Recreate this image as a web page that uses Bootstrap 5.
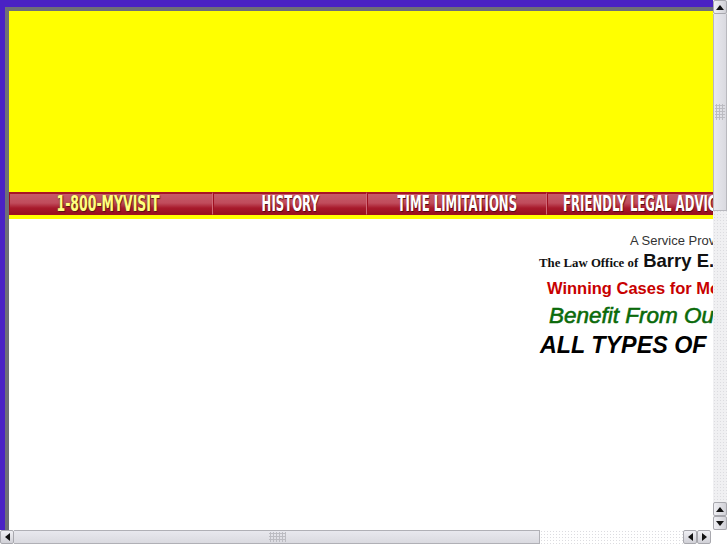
<!DOCTYPE html>
<html lang="en">
<head>
<meta charset="utf-8">
<title>1-800-MYVISIT</title>
<link href="https://cdn.jsdelivr.net/npm/bootstrap@5.3.0/dist/css/bootstrap.min.css" rel="stylesheet">
<style>
html,body{height:100%;overflow:hidden;background:#fff}
.shell{width:727px;height:545px}
.upper{height:530px}
.pane{width:713px;background:#fff;min-width:0}
.framed{flex:1;min-height:0;background:#4a22c4;padding:7px 0 0 5px}
.bevel{flex:1;min-height:0;background:#6f6f78;padding:4px 0 0 4px}
.banner-y{height:181px;background:#ff0;flex:none}
.menu-wrap{background:#ff0;padding-bottom:4px;flex:none}
.menu-bar{height:23px;white-space:nowrap;overflow:hidden}
.menu-cell{flex:none;height:23px;display:flex;align-items:center;justify-content:center;border:1px solid #a01020;border-top:2px solid #a81424;border-right-color:#d06a78;
 background:linear-gradient(#c65a68 0,#c04c5c 45%,#a81a2c 70%,#98101f 100%);
 font-family:"DejaVu Sans Condensed","DejaVu Sans",sans-serif;font-weight:700;font-size:21px;color:#fff}
.lbl{flex:none;display:block;line-height:1;transform:scaleX(.62);text-shadow:1px 1px 1px #500810}
.menu-cell.first .lbl{color:#ffff80;transform:scaleX(.66);text-shadow:0 0 2px #7a4a10,1px 1px 1px #500810}
.c1{width:204px;padding-right:6px}.c2{width:154px}.c3{width:180px}.c4{width:170px;justify-content:flex-start;padding-left:15px;overflow:hidden}
.c4 .lbl{transform-origin:left center}
.lawblock{flex:1;min-height:0;overflow:hidden;white-space:nowrap;font-family:"Liberation Sans",Arial,sans-serif;color:#000;padding-top:14px;background:#fff}
.ln{display:block;width:max-content}
.l1{margin-left:621px;font-size:13px;line-height:15px;color:#333}
.l2{margin-left:530px;font-size:18px;line-height:22px;margin-top:2px;color:#111}
.l2 em{font-family:"Liberation Serif",serif;font-style:normal;font-weight:700;font-size:12.8px}
.l2 b{font-weight:700;font-size:18.5px}
.l3{margin-left:538px;font-size:16.5px;line-height:20px;font-weight:700;color:#c80000;margin-top:4px}
.l4{margin-left:540px;font-size:22.5px;line-height:26px;font-style:italic;color:#0a6a0a;margin-top:5px;-webkit-text-stroke:.6px #0a6a0a}
.l5{margin-left:531px;font-size:23.3px;line-height:30px;font-style:italic;font-weight:700;margin-top:1px}
.vbar{width:14px;background:#f0f0f2;background-image:radial-gradient(#dcdce0 .6px,transparent .7px);background-size:3px 3px}
.hbar{height:15px;background:#fff}
.sbtn{flex:none;background:linear-gradient(90deg,#f0f0f4,#d0d0d6);border:1px solid #a8a8ae;border-radius:2px;display:flex;align-items:center;justify-content:center}
.vbtn{width:14px;height:14px}
.hbtn{width:14px;height:14px;background:linear-gradient(#f0f0f4,#d0d0d6)}
.tri{width:0;height:0;border-style:solid}
.up{border-width:0 4px 5px;border-color:transparent transparent #111}
.dn{border-width:5px 4px 0;border-color:#111 transparent transparent}
.lf{border-width:4px 5px 4px 0;border-color:transparent #111 transparent transparent}
.rt{border-width:4px 0 4px 5px;border-color:transparent transparent transparent #111}
.vthumb{height:197px;background:linear-gradient(90deg,#e8e8ee,#dadae0);border:1px solid #b8b8be;border-top:0;padding-top:90px}
.grip{background-image:radial-gradient(#bcbcc2 1px,transparent 1.1px);background-size:3px 3px}
.vgrip{width:10px;height:16px;margin:0 auto}
.vspace{flex:1}
.hthumb{width:526px;height:14px;background:linear-gradient(#e8e8ee,#dadae0);border:1px solid #b0b0b6;border-width:1px 1px 1px 0;padding-left:255px}
.hgrip{width:17px;height:10px;margin-top:1px}
.htrack{flex:1;height:14px;background-image:radial-gradient(#dcdce0 .6px,transparent .7px);background-size:3px 3px}
.hgap{width:16px}
</style>
</head>
<body class="m-0">
<div class="shell d-flex flex-column overflow-hidden">
  <div class="upper d-flex">
    <div class="pane d-flex flex-column overflow-hidden">
      <div class="framed d-flex flex-column">
        <div class="bevel d-flex flex-column">
          <div class="banner-y"></div>
          <div class="menu-wrap">
            <div class="menu-bar d-flex">
              <div class="menu-cell first c1"><span class="lbl">1-800-MYVISIT</span></div>
              <div class="menu-cell c2"><span class="lbl">HISTORY</span></div>
              <div class="menu-cell c3"><span class="lbl">TIME LIMITATIONS</span></div>
              <div class="menu-cell c4"><span class="lbl">FRIENDLY LEGAL ADVICE</span></div>
            </div>
          </div>
          <div class="lawblock">
            <span class="ln l1">A Service Provider</span>
            <span class="ln l2"><em>The Law Office of</em> <b>Barry E.</b></span>
            <span class="ln l3">Winning Cases for More</span>
            <span class="ln l4">Benefit From Our</span>
            <span class="ln l5">ALL TYPES OF</span>
          </div>
        </div>
      </div>
    </div>
    <div class="vbar d-flex flex-column">
      <div class="sbtn vbtn"><span class="tri up"></span></div>
      <div class="vthumb"><div class="grip vgrip"></div></div>
      <div class="vspace"></div>
      <div class="sbtn vbtn"><span class="tri up"></span></div>
      <div class="sbtn vbtn"><span class="tri dn"></span></div>
    </div>
  </div>
  <div class="hbar d-flex">
    <div class="sbtn hbtn"><span class="tri lf"></span></div>
    <div class="hthumb"><div class="grip hgrip"></div></div>
    <div class="htrack"></div>
    <div class="sbtn hbtn"><span class="tri lf"></span></div>
    <div class="sbtn hbtn"><span class="tri rt"></span></div>
    <div class="hgap"></div>
  </div>
</div>
<script src="https://cdn.jsdelivr.net/npm/bootstrap@5.3.0/dist/js/bootstrap.bundle.min.js"></script>
</body>
</html>
